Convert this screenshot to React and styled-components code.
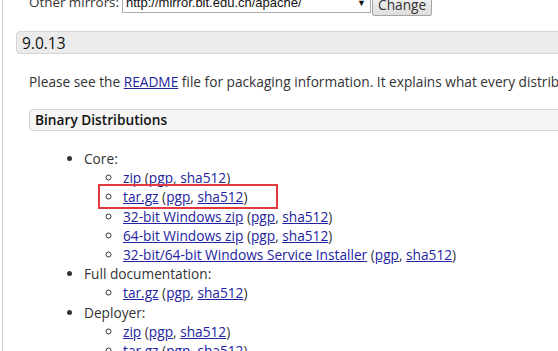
import React from 'react';
import styled, { createGlobalStyle } from 'styled-components';

const GlobalStyle = createGlobalStyle`
  html, body {
    margin: 0;
    padding: 0;
    background: #fff;
    overflow: hidden;
  }
  body {
    font-family: "Open Sans", "Noto Sans", "Liberation Sans", sans-serif;
    color: #333;
  }
`

const Page = styled.div`
  width: 760px;
  margin-top: -8px;
  margin-left: 2px;
  border-left: 1px solid #ccc;
  padding-left: 13px;
  min-height: 400px;
`

const MirrorForm = styled.form`
  display: flex;
  align-items: flex-start;
  padding-left: 13px;
  height: 26px;
  font-size: 13.4px;
`

const MirrorLabel = styled.span`
  margin-right: 3px;
  line-height: 20px;
`

const MirrorSelect = styled.div`
  width: 249px;
  height: 21px;
  border: 1px solid #a9a9a9;
  display: flex;
  align-items: center;
  justify-content: space-between;
  padding: 0 4px 0 3px;
  font-family: "Liberation Sans", Arial, sans-serif;
  font-size: 13px;
  color: #111;
  box-sizing: border-box;
`

const Caret = styled.span`
  font-size: 9px;
`

const ChangeButton = styled.button`
  height: 24px;
  margin-left: 1px;
  padding: 0 5px;
  font-family: "Open Sans", sans-serif;
  font-size: 13.7px;
  color: #333;
  background: linear-gradient(#f6f6f6, #dedede);
  border: 1px solid #a5a5a5;
  border-radius: 2px;
`

const SectionHeader = styled.h3`
  margin: 13px 0 0;
  padding: 0 5px;
  height: 23px;
  line-height: 22px;
  font-size: 15.5px;
  font-weight: normal;
  color: #111;
  background: #ebebeb;
  border: 1px solid #d4d4d4;
  border-radius: 4px;
  box-sizing: border-box;
`

const Content = styled.div`
  padding-left: 13px;
`

const Paragraph = styled.p`
  margin: 19px 0 0;
  font-size: 13.7px;
  line-height: 18px;
  white-space: nowrap;
`

const SubHeader = styled.h4`
  margin: 18px 0 0;
  padding: 0 5px;
  height: 22px;
  line-height: 20px;
  font-size: 13.7px;
  font-weight: 600;
  color: #111;
  background: #f5f5f5;
  border: 1px solid #d6d6d6;
  border-radius: 4px;
  box-sizing: border-box;
`

const List = styled.ul`
  margin: 18px 0 0;
  padding-left: 55px;
  font-size: 13.7px;
  line-height: 19.2px;
  list-style: disc;
`

const SubList = styled.ul`
  margin: 0;
  padding-left: 39px;
  list-style: circle;
`

const Item = styled.li`
  white-space: nowrap;
`

const SubItem = styled.li`
  white-space: nowrap;
  position: relative;
`

const Highlight = styled.span`
  position: absolute;
  left: -25px;
  top: -3px;
  width: 180px;
  height: 25px;
  border: 2px solid #e0393e;
  box-sizing: border-box;
  pointer-events: none;
`

const Link = styled.a`
  color: #2323a0;
  text-decoration: underline;
`

function Download({ label, highlight }) {
  return (
    <SubItem>
      <Link href="#">{label}</Link> (<Link href="#">pgp</Link>, <Link href="#">sha512</Link>)
      {highlight && <Highlight />}
    </SubItem>
  )
}

export default function App() {
  return (
    <>
      <GlobalStyle />
      <Page>
        <MirrorForm>
          <MirrorLabel>Other mirrors:</MirrorLabel>
          <MirrorSelect>
            http://mirror.bit.edu.cn/apache/
            <Caret>▼</Caret>
          </MirrorSelect>
          <ChangeButton type="button">Change</ChangeButton>
        </MirrorForm>
        <SectionHeader>9.0.13</SectionHeader>
        <Content>
          <Paragraph>
            Please see the <Link href="#">README</Link> file for packaging information. It explains what every distribution contains.
          </Paragraph>
          <SubHeader>Binary Distributions</SubHeader>
          <List>
            <Item>
              Core:
              <SubList>
                <Download label="zip" />
                <Download label="tar.gz" highlight />
                <Download label="32-bit Windows zip" />
                <Download label="64-bit Windows zip" />
                <Download label="32-bit/64-bit Windows Service Installer" />
              </SubList>
            </Item>
            <Item>
              Full documentation:
              <SubList>
                <Download label="tar.gz" />
              </SubList>
            </Item>
            <Item>
              Deployer:
              <SubList>
                <Download label="zip" />
                <Download label="tar.gz" />
              </SubList>
            </Item>
          </List>
        </Content>
      </Page>
    </>
  )
}
